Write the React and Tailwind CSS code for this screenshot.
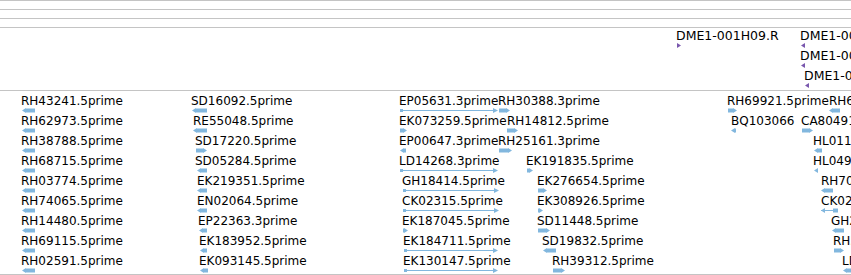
import React from "react";

const BLUE = "#82b7de";
const PURPLE = "#7a58ae";

// feature tracks: [row, labelX, label, glyph kind, glyphX, glyphW]
const topFeatures = [
  [0, 676, "DME1-001H09.R", "R", 677, 4],
  [0, 800, "DME1-001H12.F", "L", 801, 4],
  [1, 800, "DME1-002A03.F", "L", 801, 4],
  [2, 804, "DME1-002C07.F", "L", 805, 4],
];

const estFeatures = [
  [0, 21, "RH43241.5prime", "L", 22, 13],
  [0, 191, "SD16092.5prime", "L", 192, 15],
  [0, 399, "EP05631.3prime", "line", 400, 98],
  [0, 498, "RH30388.3prime", "R", 499, 11],
  [0, 727, "RH69921.5prime", "R", 728, 9],
  [0, 829, "RH61736.5prime", "L", 829, 11],

  [1, 21, "RH62973.5prime", "L", 22, 13],
  [1, 193, "RE55048.5prime", "L", 193, 14],
  [1, 399, "EK073259.5prime", "R", 400, 7],
  [1, 507, "RH14812.5prime", "R", 507, 11],
  [1, 731, "BQ103066", "L", 731, 5],
  [1, 801, "CA804912", "R", 802, 11],

  [2, 21, "RH38788.5prime", "L", 22, 13],
  [2, 195, "SD17220.5prime", "R", 196, 11],
  [2, 399, "EP00647.3prime", "L", 400, 6],
  [2, 498, "RH25161.3prime", "R", 499, 13],
  [2, 813, "HL011483", "L", 814, 8],

  [3, 21, "RH68715.5prime", "L", 22, 13],
  [3, 195, "SD05284.5prime", "L", 197, 10],
  [3, 399, "LD14268.3prime", "line", 400, 98],
  [3, 526, "EK191835.5prime", "R", 527, 6],
  [3, 813, "HL049227", "L", 814, 4],

  [4, 21, "RH03774.5prime", "L", 22, 13],
  [4, 197, "EK219351.5prime", "L", 197, 10],
  [4, 402, "GH18414.5prime", "line", 403, 96],
  [4, 537, "EK276654.5prime", "R", 538, 9],
  [4, 821, "RH70321.5prime", "L", 821, 12],

  [5, 21, "RH74065.5prime", "L", 22, 13],
  [5, 197, "EN02064.5prime", "L", 197, 10],
  [5, 402, "CK02315.5prime", "line", 403, 96],
  [5, 537, "EK308926.5prime", "R", 538, 5],
  [5, 821, "CK02804.5prime", "both", 821, 17],

  [6, 21, "RH14480.5prime", "L", 22, 13],
  [6, 198, "EP22363.3prime", "L", 199, 8],
  [6, 402, "EK187045.5prime", "R", 403, 5],
  [6, 537, "SD11448.5prime", "R", 538, 12],
  [6, 831, "GH21173.5prime", "L", 832, 12],

  [7, 21, "RH69115.5prime", "L", 22, 13],
  [7, 199, "EK183952.5prime", "L", 200, 7],
  [7, 403, "EK184711.5prime", "line", 404, 94],
  [7, 542, "SD19832.5prime", "L", 543, 13],
  [7, 833, "RH58820.5prime", "R", 834, 10],

  [8, 21, "RH02591.5prime", "L", 22, 13],
  [8, 199, "EK093145.5prime", "L", 200, 8],
  [8, 403, "EK130147.5prime", "line", 404, 94],
  [8, 552, "RH39312.5prime", "R", 553, 12],
  [8, 842, "LD22917.5prime", "L", 843, 10],
];

function Glyph({ kind, w, color }) {
  let shape;
  if (kind === "L") {
    shape = <polygon points={`0,2.5 4,0 4,0.5 ${w},0.5 ${w},4.5 4,4.5 4,5`} />;
  } else if (kind === "R") {
    shape = <polygon points={`0,0.5 ${w - 4},0.5 ${w - 4},0 ${w},2.5 ${w - 4},5 ${w - 4},4.5 0,4.5`} />;
  } else if (kind === "line") {
    shape = (
      <>
        <rect x="0" y="1" width="3" height="3" />
        <rect x="0" y="2" width={w - 4} height="1" />
        <polygon points={`${w - 5},0 ${w},2.5 ${w - 5},5`} />
      </>
    );
  } else {
    shape = (
      <>
        <polygon points="0,2.5 4,0 4,5" />
        <rect x="0" y="2" width={w} height="1" />
        <rect x={w - 5} y="0.5" width="5" height="4" />
      </>
    );
  }
  return (
    <svg width={w} height="5" viewBox={`0 0 ${w} 5`} fill={color} className="block">
      {shape}
    </svg>
  );
}

function Feature({ row, x, label, kind, gx, gw, color, top, big }) {
  return (
    <>
      <div
        className={`absolute leading-[14px] text-black whitespace-nowrap ${big ? "text-[12.5px]" : "text-[12px]"}`}
        style={{ left: x, top: top + row * 20 }}
      >
        {label}
      </div>
      <div className="absolute" style={{ left: gx, top: top + row * 20 + 14 }}>
        <Glyph kind={kind} w={gw} color={color} />
      </div>
    </>
  );
}

function Track({ height, features, color, top, big }) {
  return (
    <div className="relative border-t border-[#c4c4c4] overflow-hidden" style={{ height }}>
      {features.map(([row, x, label, kind, gx, gw], i) => (
        <Feature key={i} row={row} x={x} label={label} kind={kind} gx={gx} gw={gw} color={color} top={top} big={big} />
      ))}
    </div>
  );
}

export default function App() {
  return (
    <div
      className="w-[851px] h-[275px] bg-white overflow-hidden"
      style={{ fontFamily: '"DejaVu Sans", "Liberation Sans", sans-serif' }}
    >
      {/* ruler lines */}
      <div className="h-[9px] border-t border-[#c4c4c4]" />
      <div className="h-[9px] border-t border-[#c4c4c4]" />
      <div className="h-[9px] border-t border-[#c4c4c4]" />

      {/* BAC ends track */}
      <Track height={63} features={topFeatures} color={PURPLE} top={1} big />

      {/* EST track */}
      <Track height={184} features={estFeatures} color={BLUE} top={3} />
      <div className="border-t border-[#c4c4c4]" />
    </div>
  );
}
